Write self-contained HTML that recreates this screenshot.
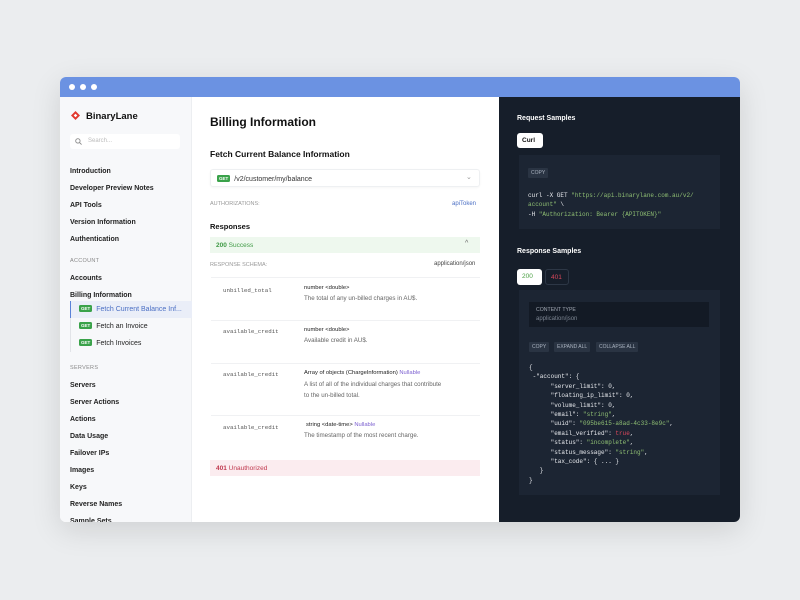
<!DOCTYPE html>
<html><head><meta charset="utf-8"><style>
*{margin:0;padding:0;box-sizing:border-box}
body{width:800px;height:600px;background:#ebedef;font-family:"Liberation Sans",sans-serif;position:relative;overflow:hidden}
.a{position:absolute;white-space:nowrap}
.win{position:absolute;left:60px;top:77px;width:680px;height:445px;border-radius:6px;overflow:hidden;box-shadow:0 8px 30px rgba(0,0,0,.12);background:#fff}
.bar{position:absolute;left:0;top:0;width:680px;height:20px;background:#6b92e2}
.dot{position:absolute;top:7px;width:6px;height:6px;border-radius:50%;background:#fff}
.side{position:absolute;left:0;top:20px;width:132px;height:425px;background:#f7f8fa;border-right:1px solid #eceef1;font-size:7px;color:#222}
.side .a{font-weight:bold}
.sec{font-size:5.5px!important;color:#888;font-weight:normal!important;letter-spacing:.3px}
.get{display:inline-block;background:#3aa24a;color:#fff;font-size:4.5px;font-weight:bold;padding:1px 2px;border-radius:1.5px;margin-right:4px;vertical-align:1px}
.main{position:absolute;left:132px;top:20px;width:307px;height:425px;background:#fff}
.dark{position:absolute;left:439px;top:20px;width:241px;height:425px;background:#161e2a;color:#fff}
.mono{font-family:"Liberation Mono",monospace}
.row{position:absolute;left:19px;width:269px;border-top:1px solid #f0f1f3}
.btn{position:absolute;background:#2a3443;color:#aab3c0;font-size:5px;padding:2px 3px;border-radius:1px}
.code{font-family:"Liberation Mono",monospace;font-size:6px;line-height:9.4px;color:#e6e8ec}
.s{color:#8fbf73}
</style></head><body>
<div class="win">
<div class="bar"><div class="dot" style="left:9px"></div><div class="dot" style="left:20px"></div><div class="dot" style="left:31px"></div></div>
<div class="side">
<svg class="a" style="left:11px;top:14px" width="9" height="9" viewBox="0 0 10 10"><path d="M5 0L10 5L5 10L0 5Z" fill="#e2392f"/><path d="M5 3L7 5L5 7L3 5Z" fill="#fff"/></svg>
<div class="a" style="left:26px;top:14px;font-size:9.5px;color:#111">BinaryLane</div>
<div class="a" style="left:10px;top:37px;width:110px;height:15px;background:#fff;border-radius:3px;font-weight:normal!important;color:#bbb;font-size:6px;padding:4px 0 0 18px">Search...</div>
<svg class="a" style="left:15px;top:41px" width="7" height="7" viewBox="0 0 8 8"><circle cx="3.3" cy="3.3" r="2.5" fill="none" stroke="#888" stroke-width="1"/><path d="M5.2 5.2L7.5 7.5" stroke="#888"/></svg>
<div class="a" style="left:10px;top:71px">Introduction</div>
<div class="a" style="left:10px;top:88px">Developer Preview Notes</div>
<div class="a" style="left:10px;top:105px">API Tools</div>
<div class="a" style="left:10px;top:122px">Version Information</div>
<div class="a" style="left:10px;top:139px">Authentication</div>
<div class="a sec" style="left:10px;top:161px">ACCOUNT</div>
<div class="a" style="left:10px;top:178px">Accounts</div>
<div class="a" style="left:10px;top:195px">Billing Information</div>
<div style="position:absolute;left:10px;top:205px;width:1px;height:50px;background:#e2e4e8"></div>
<div style="position:absolute;left:10px;top:204px;width:122px;height:17px;background:#eaeef8;border-left:1.5px solid #5a82d8"></div>
<div class="a" style="left:19px;top:208px;font-weight:normal!important;color:#4b6fc4"><span class="get">GET</span>Fetch Current Balance Inf...</div>
<div class="a" style="left:19px;top:225px;font-weight:normal!important"><span class="get">GET</span>Fetch an Invoice</div>
<div class="a" style="left:19px;top:242px;font-weight:normal!important"><span class="get">GET</span>Fetch Invoices</div>
<div class="a sec" style="left:10px;top:268px">SERVERS</div>
<div class="a" style="left:10px;top:285px">Servers</div>
<div class="a" style="left:10px;top:302px">Server Actions</div>
<div class="a" style="left:10px;top:319px">Actions</div>
<div class="a" style="left:10px;top:336px">Data Usage</div>
<div class="a" style="left:10px;top:353px">Failover IPs</div>
<div class="a" style="left:10px;top:370px">Images</div>
<div class="a" style="left:10px;top:387px">Keys</div>
<div class="a" style="left:10px;top:404px">Reverse Names</div>
<div class="a" style="left:10px;top:421px">Sample Sets</div>
</div>
<div class="main">
<div class="a" style="left:18px;top:18px;font-size:12px;color:#111;font-weight:bold">Billing Information</div>
<div class="a" style="left:18px;top:52px;font-size:8.5px;color:#111;font-weight:bold">Fetch Current Balance Information</div>
<div class="a" style="left:18px;top:72px;width:270px;height:18px;border:1px solid #eef0f2;border-radius:3px;box-shadow:0 1px 2px rgba(0,0,0,.04)"></div>
<div class="a" style="left:25px;top:78px;font-size:7px;color:#333"><span class="get">GET</span>/v2/customer/my/balance</div>
<div class="a" style="left:274px;top:76px;font-size:7px;color:#999">⌄</div>
<div class="a" style="left:18px;top:104px;font-size:5.5px;color:#999">AUTHORIZATIONS:</div>
<div class="a" style="left:260px;top:104px;font-size:6px;color:#4b6fc4">apiToken</div>
<div class="a" style="left:18px;top:125px;font-size:7.5px;color:#111;font-weight:bold">Responses</div>
<div class="a" style="left:18px;top:140px;width:270px;height:16px;background:#eef8ee"></div>
<div class="a" style="left:24px;top:145px;font-size:6.5px;color:#3f9a45"><b>200</b> Success</div>
<div class="a" style="left:273px;top:143px;font-size:7px;color:#666">^</div>
<div class="a" style="left:18px;top:165px;font-size:5.5px;color:#999">RESPONSE SCHEMA:</div>
<div class="a" style="left:242px;top:164px;font-size:6px;color:#444">application/json</div>
<div class="row" style="top:180px;height:43px"></div>
<div class="a mono" style="left:31px;top:190px;font-size:5.8px;color:#555">unbilled_total</div>
<div class="a" style="left:112px;top:188px;font-size:5.8px;color:#222">number &lt;double&gt;</div>
<div class="a" style="left:112px;top:198px;font-size:6.2px;color:#666">The total of any un-billed charges in AU$.</div>
<div class="row" style="top:223px;height:43px"></div>
<div class="a mono" style="left:31px;top:231px;font-size:5.8px;color:#555">available_credit</div>
<div class="a" style="left:112px;top:230px;font-size:5.8px;color:#222">number &lt;double&gt;</div>
<div class="a" style="left:112px;top:240px;font-size:6.2px;color:#666">Available credit in AU$.</div>
<div class="row" style="top:266px;height:52px"></div>
<div class="a mono" style="left:31px;top:274px;font-size:5.8px;color:#555">available_credit</div>
<div class="a" style="left:112px;top:273px;font-size:5.8px;color:#222">Array of objects (ChargeInformation) <span style="color:#7b5fd0">Nullable</span></div>
<div class="a" style="left:112px;top:283px;font-size:6.2px;color:#666;line-height:10.5px">A list of all of the individual charges that contribute<br>to the un-billed total.</div>
<div class="row" style="top:318px;height:42px"></div>
<div class="a mono" style="left:31px;top:327px;font-size:5.8px;color:#555">available_credit</div>
<div class="a" style="left:114px;top:325px;font-size:5.8px;color:#222">string &lt;date-time&gt; <span style="color:#7b5fd0">Nullable</span></div>
<div class="a" style="left:112px;top:335px;font-size:6.2px;color:#666">The timestamp of the most recent charge.</div>
<div class="a" style="left:18px;top:363px;width:270px;height:16px;background:#fbecef"></div>
<div class="a" style="left:24px;top:368px;font-size:6.5px;color:#c0394f"><b>401</b> Unauthorized</div>
</div>
<div class="dark">
<div class="a" style="left:18px;top:18px;font-size:7px;font-weight:bold">Request Samples</div>
<div class="a" style="left:18px;top:36px;width:26px;height:15px;background:#fff;border-radius:3px;color:#111;font-size:6.5px;font-weight:bold;padding:4px 0 0 5px">Curl</div>
<div class="a" style="left:20px;top:58px;width:201px;height:74px;background:#1c2533"></div>
<div class="btn" style="left:29px;top:71px">COPY</div>
<div class="a code" style="left:29px;top:94px">curl -X GET <span class="s">"https://api.binarylane.com.au/v2/</span><br><span class="s">account"</span> \<br><span>-H </span><span class="s">"Authorization: Bearer {APITOKEN}"</span></div>
<div class="a" style="left:18px;top:151px;font-size:7px;font-weight:bold">Response Samples</div>
<div class="a" style="left:18px;top:172px;width:25px;height:16px;background:#fff;border-radius:3px;color:#4aa043;font-size:6.5px;padding:4px 0 0 5px">200</div>
<div class="a" style="left:46px;top:172px;width:24px;height:16px;border:1px solid #2d3746;border-radius:3px;color:#d9475b;font-size:6.5px;padding:4px 0 0 5px">401</div>
<div class="a" style="left:20px;top:193px;width:201px;height:205px;background:#1c2533"></div>
<div class="a" style="left:30px;top:205px;width:180px;height:25px;background:#131a25"></div>
<div class="a" style="left:37px;top:210px;font-size:5.2px;color:#a0a7b2">CONTENT TYPE</div>
<div class="a" style="left:37px;top:219px;font-size:6px;color:#7c8592">application/json</div>
<div class="btn" style="left:30px;top:245px">COPY</div>
<div class="btn" style="left:55px;top:245px">EXPAND ALL</div>
<div class="btn" style="left:97px;top:245px">COLLAPSE ALL</div>
<div class="a code" style="left:30px;top:266px">{<br>&nbsp;-"account": {<br>&nbsp;&nbsp;&nbsp;&nbsp;&nbsp;&nbsp;"server_limit": 0,<br>&nbsp;&nbsp;&nbsp;&nbsp;&nbsp;&nbsp;"floating_ip_limit": 0,<br>&nbsp;&nbsp;&nbsp;&nbsp;&nbsp;&nbsp;"volume_limit": 0,<br>&nbsp;&nbsp;&nbsp;&nbsp;&nbsp;&nbsp;"email": <span class="s">"string"</span>,<br>&nbsp;&nbsp;&nbsp;&nbsp;&nbsp;&nbsp;"uuid": <span class="s">"095be615-a8ad-4c33-8e9c"</span>,<br>&nbsp;&nbsp;&nbsp;&nbsp;&nbsp;&nbsp;"email_verified": <span style="color:#d9475b">true</span>,<br>&nbsp;&nbsp;&nbsp;&nbsp;&nbsp;&nbsp;"status": <span class="s">"incomplete"</span>,<br>&nbsp;&nbsp;&nbsp;&nbsp;&nbsp;&nbsp;"status_message": <span class="s">"string"</span>,<br>&nbsp;&nbsp;&nbsp;&nbsp;&nbsp;&nbsp;"tax_code": { ... }<br>&nbsp;&nbsp;&nbsp;}<br>}</div>
</div>
</div>
</body></html>
